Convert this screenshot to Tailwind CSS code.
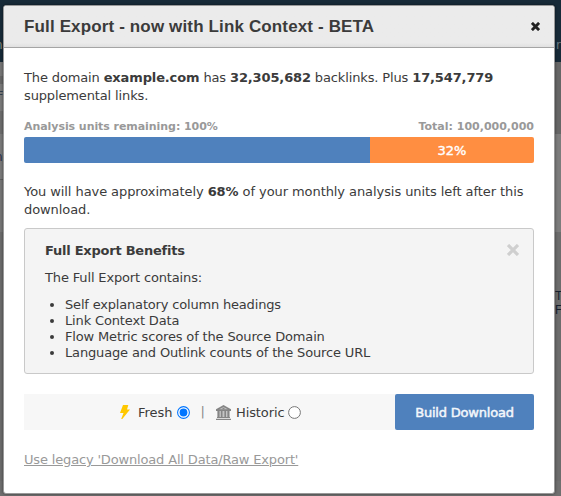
<!DOCTYPE html>
<html lang="en">
<head>
  <meta charset="UTF-8">
  <meta name="viewport" content="width=device-width, initial-scale=1.0">
  <title>Full Export</title>
  <script src="https://cdn.jsdelivr.net/npm/@tailwindcss/browser@4"></script>
</head>
<body class="relative h-[496px] w-[561px] overflow-hidden bg-[#777777] font-['Verdana','DejaVu_Sans',sans-serif] text-[13px] text-[#3b3b3b]">
  <!-- Dimmed page behind the dialog -->
  <div class="flex h-[496px] flex-col" aria-hidden="true">
    <div class="h-[62px] bg-[#172a38]"></div>
    <div class="flex h-[170px] justify-between">
      <div class="w-1">
        <div class="h-[14px] bg-[#777777]"></div>
        <div class="h-2 bg-[#686868]"></div>
        <div class="h-[27px] bg-[#7b7b7b]"></div>
        <div class="h-[23px] bg-[#6d6d6d]"></div>
        <div class="h-[45px] bg-[#7b7b7b]"></div>
        <div class="h-px bg-[#5d5d5d]"></div>
      </div>
      <div class="w-[7px]">
        <div class="h-[72px] bg-[#666666]"></div>
        <div class="h-[98px] bg-[#7c7c7c]"></div>
      </div>
    </div>
    <div class="h-[249px] bg-[#6c6c6c]"></div>
    <div class="h-[15px] bg-[#6f6f6f]"></div>
  </div>
  <span class="absolute top-[39px] left-[-5px] text-[12px] leading-3 text-[#8c8c80]">n</span>
  <span class="absolute top-[39px] left-[556px] text-[12px] leading-3 text-[#66777f]">r</span>
  <span class="absolute top-[90px] left-[-3px] text-[11px] leading-3 text-[#333f4c]">F</span>
  <span class="absolute top-[151px] left-[-5px] text-[12px] leading-3 text-[#252d4a]">n</span>
  <div class="absolute top-[289px] left-[555px] font-['Liberation_Sans',sans-serif] text-[12px] leading-[14px] text-[#15202f]">T<br>F</div>

  <div class="absolute top-[5px] left-[3px] flex h-[489px] w-[552px] flex-col overflow-hidden rounded-[3px] border border-[#999999] bg-white shadow-[0_0_3px_rgba(0,0,0,0.5)]">
    <div class="flex h-[42px] shrink-0 items-center justify-between border-b border-[#a5a5a5] bg-linear-to-b from-[#ebebeb] from-90% to-[#e0e0e0] pr-[14px] pl-5">
      <h1 class="text-[17px] font-bold tracking-[0.14px] whitespace-nowrap font-['Liberation_Sans',sans-serif]">Full Export - now with Link Context - BETA</h1>
      <svg class="h-[9px] w-[9px]" viewBox="0 0 10 10" stroke="#222" stroke-width="3.2" aria-label="Close"><path d="M1 1l8 8M9 1l-8 8"/></svg>
    </div>

    <div class="flex flex-col px-5 whitespace-nowrap">
      <p class="mt-[21px] leading-[18px] tracking-[-0.135px]">The domain <b>example.com</b> has <b>32,305,682</b> backlinks. Plus <b>17,547,779</b><br>supplemental links.</p>

      <div class="mt-[14px] flex justify-between text-[11px] leading-4 font-bold tracking-[-0.06px] text-[#999999]">
        <span>Analysis units remaining: 100%</span>
        <span class="tracking-normal">Total: 100,000,000</span>
      </div>
      <div class="mt-[2px] flex h-[26px] overflow-hidden rounded-[2px] text-center leading-[27px] text-white">
        <div class="flex-1 bg-[#4f81bd]"></div>
        <div class="w-[164px] bg-[#ff8e41] [-webkit-text-stroke:0.4px_white]">32%</div>
      </div>

      <p class="mt-[20px] leading-[18px] tracking-[-0.075px]">You will have approximately <b>68%</b> of your monthly analysis units left after this<br>download.</p>

      <section class="relative mt-[9px] h-[146px] rounded-[3px] border border-[#c9c9c9] bg-[#f4f4f4] px-5 pt-[13px] tracking-[-0.15px]">
        <svg class="absolute top-[15px] right-[14px] h-3 w-3" viewBox="0 0 12 12" stroke="#cfcfcf" stroke-width="3.2" aria-label="Dismiss"><path d="M1 1l10 10M11 1l-10 10"/></svg>
        <h2 class="leading-[18px] font-bold tracking-[-0.24px]">Full Export Benefits</h2>
        <p class="mt-[9px] leading-[18px]">The Full Export contains:</p>
        <ul class="mt-[10px] list-disc pl-5 leading-4">
          <li class="tracking-[-0.18px]">Self explanatory column headings</li>
          <li>Link Context Data</li>
          <li>Flow Metric scores of the Source Domain</li>
          <li>Language and Outlink counts of the Source URL</li>
        </ul>
      </section>

      <div class="mt-5 flex h-9 bg-[#f7f7f7]">
        <div class="flex flex-1 items-center pl-24">
          <svg class="h-[14px] w-[10px]" viewBox="0 0 10 14" fill="#ffc800"><path d="M3 0h5.3L7 4.6h3L2.3 14H1.2L3.5 8H0z"/></svg>
          <span class="mt-px ml-2">Fresh</span>
          <svg class="ml-1 h-[13px] w-[13px]" viewBox="0 0 13 13"><circle cx="6.5" cy="6.5" r="5.9" fill="#fff" stroke="#0075ff" stroke-width="1.1"/><circle cx="6.5" cy="6.5" r="3.9" fill="#0075ff"/></svg>
          <span class="ml-[11px] text-[#888888]">|</span>
          <svg class="ml-[11px] h-[15px] w-[15px]" viewBox="0 0 15 15" fill="#858585"><path d="M7.5 0L15 4.2V6H0V4.2z"/><path fill="#c4c4c4" d="M7.5 1.9L3.2 4.3h8.6zM1 6h13v6H1z"/><path d="M1.7 6h1.8v6H1.7zM4.9 6h1.6v6H4.9zM8.4 6H10v6H8.4zM11.4 6h1.8v6h-1.8zM6.5 2.8h2v1.5h-2zM1 12h13v1H1zM0 13.8h15V15H0z"/></svg>
          <span class="mt-px ml-[5px] tracking-[-0.1px]">Historic</span>
          <svg class="ml-[3px] h-[13px] w-[13px]" viewBox="0 0 13 13"><circle cx="6.5" cy="6.5" r="5.9" fill="#fff" stroke="#767676" stroke-width="1"/></svg>
        </div>
        <button class="w-[139px] rounded-[2px] bg-[#4f81bd] pt-px tracking-[-0.2px] text-[#f2f6fb] [-webkit-text-stroke:0.5px_#f2f6fb]">Build Download</button>
      </div>

      <a href="#" class="mt-[21px] self-start leading-[18px] tracking-[-0.16px] text-[#999999] underline">Use legacy 'Download All Data/Raw Export'</a>
    </div>
  </div>
</body>
</html>
